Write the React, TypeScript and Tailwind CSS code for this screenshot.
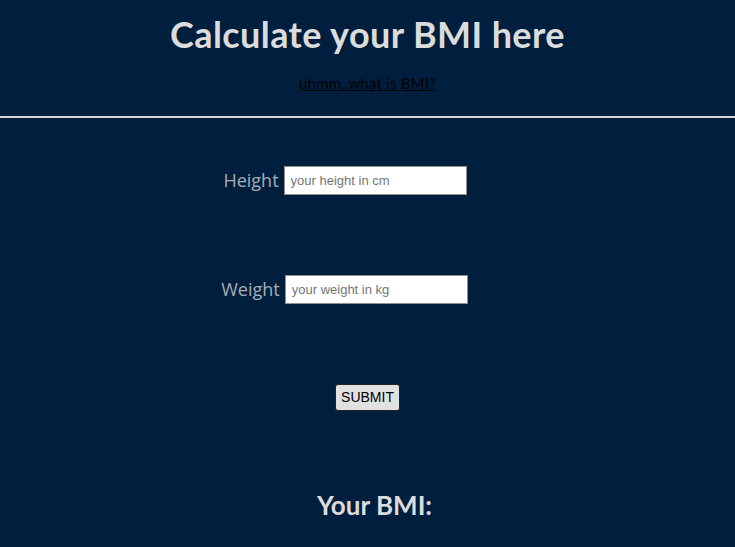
export default function App() {
  return (
    <div className="min-h-[547px] w-full bg-[#001f3f] overflow-hidden" style={{ fontFamily: "'Lato', 'Noto Sans', sans-serif" }}>
      <header className="flex flex-col items-center pt-[13px]">
        <h1 className="text-[36px] leading-[42px] font-bold text-[#dcdcdc] tracking-[0.4px]">
          Calculate your BMI here
        </h1>
        <a href="#" className="mt-[19px] text-[15px] leading-[18px] text-black underline tracking-[0.2px]">
          uhmm..what is BMI?
        </a>
      </header>
      <hr className="mt-[24px] border-0 border-t-2 border-[#d6d6d6]" />

      <form className="flex flex-col items-center" onSubmit={(e) => e.preventDefault()}>
        <div className="mt-[48px] flex items-center gap-[5px] pr-[45px]">
          <label className="text-[18px] text-[#a7adb5]" style={{ fontFamily: "'Open Sans', sans-serif" }}>Height</label>
          <input
            className="w-[183px] h-[29px] bg-white border border-[#8f8f8f] px-[6px] text-[13px] placeholder:text-[#757575]"
            style={{ fontFamily: "'Liberation Sans', Arial, sans-serif" }}
            placeholder="your height in cm"
          />
        </div>
        <div className="mt-[80px] flex items-center gap-[5px] pr-[46px]">
          <label className="text-[18px] text-[#a7adb5]" style={{ fontFamily: "'Open Sans', sans-serif" }}>Weight</label>
          <input
            className="w-[183px] h-[29px] bg-white border border-[#8f8f8f] px-[6px] text-[13px] placeholder:text-[#757575]"
            style={{ fontFamily: "'Liberation Sans', Arial, sans-serif" }}
            placeholder="your weight in kg"
          />
        </div>
        <button
          type="submit"
          className="mt-[80px] h-[27px] px-[5px] bg-[#e1e1e1] border border-[#222] rounded-[3px] text-[14px] text-black"
          style={{ fontFamily: "'Liberation Sans', Arial, sans-serif" }}
        >
          SUBMIT
        </button>
      </form>

      <h2 className="mt-[75px] text-center text-[26px] font-bold text-[#dcdcdc] pl-[14px]">
        Your BMI:
      </h2>
    </div>
  );
}
